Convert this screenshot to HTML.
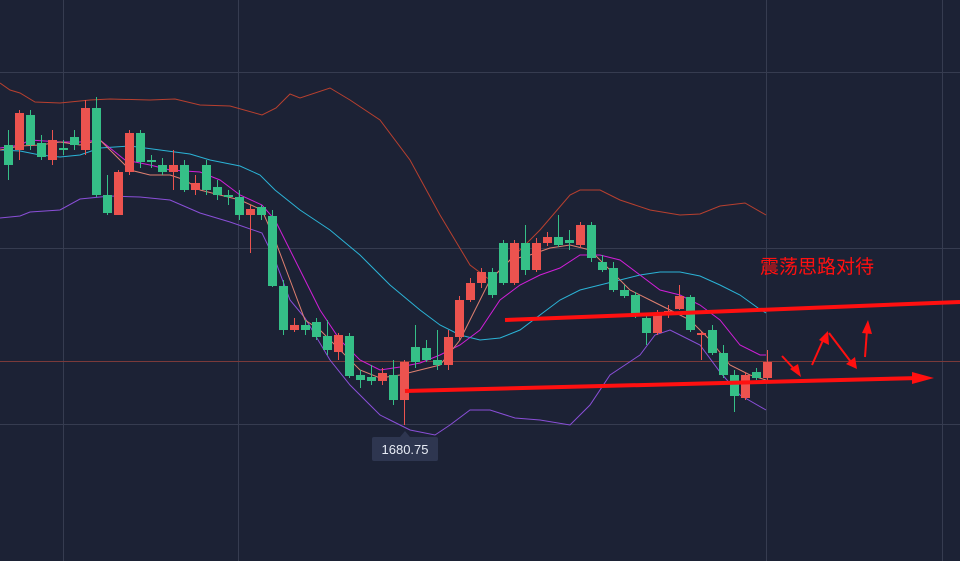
<!DOCTYPE html><html><head><meta charset="utf-8"><style>
body{margin:0;background:#1c2235;width:960px;height:561px;overflow:hidden;font-family:"Liberation Sans","Noto Sans CJK SC",sans-serif}
</style></head><body>
<svg width="960" height="561" style="position:absolute;left:0;top:0">
<rect width="960" height="561" fill="#1c2235"/>
<g stroke="#363c50" stroke-width="1">
<line x1="0" y1="72.5" x2="960" y2="72.5"/><line x1="0" y1="248.5" x2="960" y2="248.5"/><line x1="0" y1="424.5" x2="960" y2="424.5"/>
<line x1="63.5" y1="0" x2="63.5" y2="561"/><line x1="238.5" y1="0" x2="238.5" y2="561"/><line x1="766.5" y1="0" x2="766.5" y2="561"/><line x1="942.5" y1="0" x2="942.5" y2="561"/>
</g>
<line x1="0" y1="361.5" x2="960" y2="361.5" stroke="#7a3a3a"/>
<g fill="none" stroke-width="1">
<polyline stroke="#b8402f" points="0,83 10,90 20,93 35,102 60,103 90,100 110,99 150,100 175,99 200,105 230,106 262,115 276,108 290,94 300,98 330,88 350,100 380,120 410,160 440,215 470,265 490,280 510,260 540,230 570,195 580,190 600,190 620,200 650,210 680,215 700,214 720,206 745,203 766,215"/>
<polyline stroke="#8a4fd8" points="0,218 20,216 30,212 60,210 80,199 110,196 140,197 170,200 200,213 230,222 262,233 275,260 290,300 305,318 330,360 350,385 370,405 380,415 390,420 410,430 435,435 450,425 470,410 490,410 515,418 540,420 570,425 590,405 610,375 625,365 640,355 655,335 670,330 680,335 700,345 720,372 740,395 766,410"/>
<polyline stroke="#2bb3d6" points="0,150 20,151 40,155 60,157 80,155 100,148 130,146 160,150 190,154 210,160 240,166 260,175 275,190 300,210 330,230 360,255 390,285 420,310 440,325 460,335 480,340 500,338 520,330 540,315 560,300 580,290 600,285 620,280 640,275 660,272 680,272 700,276 720,285 740,295 758,308 766,313"/>
<polyline stroke="#d01fd8" points="0,148 20,145 30,140 60,142 80,142 100,140 125,160 150,165 170,170 200,172 220,180 240,195 262,205 275,220 290,250 305,280 320,310 340,340 360,360 380,370 400,367 420,363 440,355 460,345 480,330 500,300 520,285 540,275 560,268 580,255 600,255 620,260 640,275 660,290 680,295 700,305 720,320 740,345 760,355 766,355"/>
<polyline stroke="#e08070" points="0,150 20,146 40,145 60,142 80,145 100,140 130,170 150,175 170,175 185,180 200,190 220,195 240,200 262,210 275,240 290,280 305,320 320,330 340,350 360,370 380,378 400,375 420,370 440,365 460,340 475,310 490,280 510,260 530,255 550,248 570,245 590,250 610,270 630,290 650,300 670,310 690,320 710,340 730,365 750,375 766,380"/>
</g>
<g id="c"></g>
<path d="M505,320 L960,302" stroke="#ff1010" stroke-width="4" fill="none"/>
<path d="M405,391 L920,378" stroke="#ff1010" stroke-width="4" fill="none"/>
<polygon points="912,372 934,378 912,384" fill="#ff1010"/>
<g stroke="#ff1010" stroke-width="2" fill="#ff1010">
<line x1="782" y1="356" x2="796" y2="371"/><polygon points="790,369 801,377 798,364" stroke="none"/>
<line x1="812" y1="365" x2="824" y2="338"/><polygon points="819,340 828,331 829,345" stroke="none"/>
<line x1="829" y1="333" x2="851" y2="362"/><polygon points="846,364 857,369 855,357" stroke="none"/>
<line x1="865" y1="357" x2="867" y2="330"/><polygon points="862,333 868,320 872,334" stroke="none"/>
</g>
<rect x="372" y="437" width="66" height="24" rx="2" fill="#2e3650"/>
<polygon points="400,437 405,431 410,437" fill="#2e3650"/>
<text x="405" y="454" fill="#e8ecf5" font-size="13" text-anchor="middle" font-family="Liberation Sans,sans-serif">1680.75</text>
<text x="760" y="273" fill="#ff1010" font-size="19" font-family="Liberation Sans,Noto Sans CJK SC,sans-serif">震荡思路对待</text>
</svg>
<script>
var d=[[8,'g',145,165,130,180],[19,'r',113,150,110,160],[30,'g',115,145,110,150],[41,'g',143,157,135,160],[52,'r',140,160,130,165],[63,'g',148,150,140,155],[74,'g',137,145,130,150],[85,'r',108,150,100,155],[96,'g',108,195,97,197],[107,'g',195,213,175,215],[118,'r',172,215,170,215],[129,'r',133,172,130,175],[140,'g',133,162,130,168],[151,'g',160,162,155,168],[162,'g',165,172,158,175],[173,'r',165,172,150,190],[184,'g',165,190,160,192],[195,'r',183,190,175,195],[206,'g',165,190,160,195],[217,'g',187,195,180,200],[228,'g',195,197,190,205],[239,'g',197,215,190,220],[250,'r',209,215,205,253],[261,'g',207,215,205,220],[272,'g',216,286,210,287],[283,'g',286,330,280,335],[294,'r',325,330,318,332],[305,'g',325,330,320,335],[316,'g',322,337,318,340],[327,'g',336,350,320,355],[338,'r',335,352,333,360],[349,'g',336,376,333,378],[360,'g',375,380,370,388],[371,'g',377,381,365,385],[382,'r',373,381,368,385],[393,'g',375,400,360,405],[404,'r',362,400,360,425],[415,'g',347,362,325,368],[426,'g',348,360,340,362],[437,'g',360,365,330,370],[448,'r',337,365,330,370],[459,'r',300,337,296,340],[470,'r',283,300,278,302],[481,'r',272,283,268,288],[492,'g',272,295,268,298],[503,'g',243,283,240,285],[514,'r',243,283,240,285],[525,'g',243,270,225,275],[536,'r',243,270,238,272],[547,'r',237,243,232,246],[558,'g',237,245,215,247],[569,'g',240,243,230,250],[580,'r',225,245,222,248],[591,'g',225,258,222,262],[602,'g',262,270,255,272],[613,'g',268,290,262,292],[624,'g',290,296,285,298],[635,'g',295,315,292,318],[646,'g',318,333,315,345],[657,'r',313,333,310,335],[668,'r',311,315,305,318],[679,'r',296,309,285,310],[690,'g',297,330,295,332],[701,'r',333,335,332,360],[712,'g',330,353,325,355],[723,'g',353,375,345,378],[734,'g',375,396,370,412],[745,'r',375,398,372,400],[756,'g',372,378,368,380],[767,'r',362,378,350,380]];
var s='';d.forEach(function(c){var col=c[1]=='g'?'#35bf87':'#ec534f';s+='<line x1="'+(c[0]+.5)+'" x2="'+(c[0]+.5)+'" y1="'+c[4]+'" y2="'+c[5]+'" stroke="'+col+'"/><rect x="'+(c[0]-4)+'" y="'+c[2]+'" width="9" height="'+Math.max(2,c[3]-c[2])+'" fill="'+col+'"/>';});
document.getElementById('c').innerHTML=s;
</script>
</body></html>
